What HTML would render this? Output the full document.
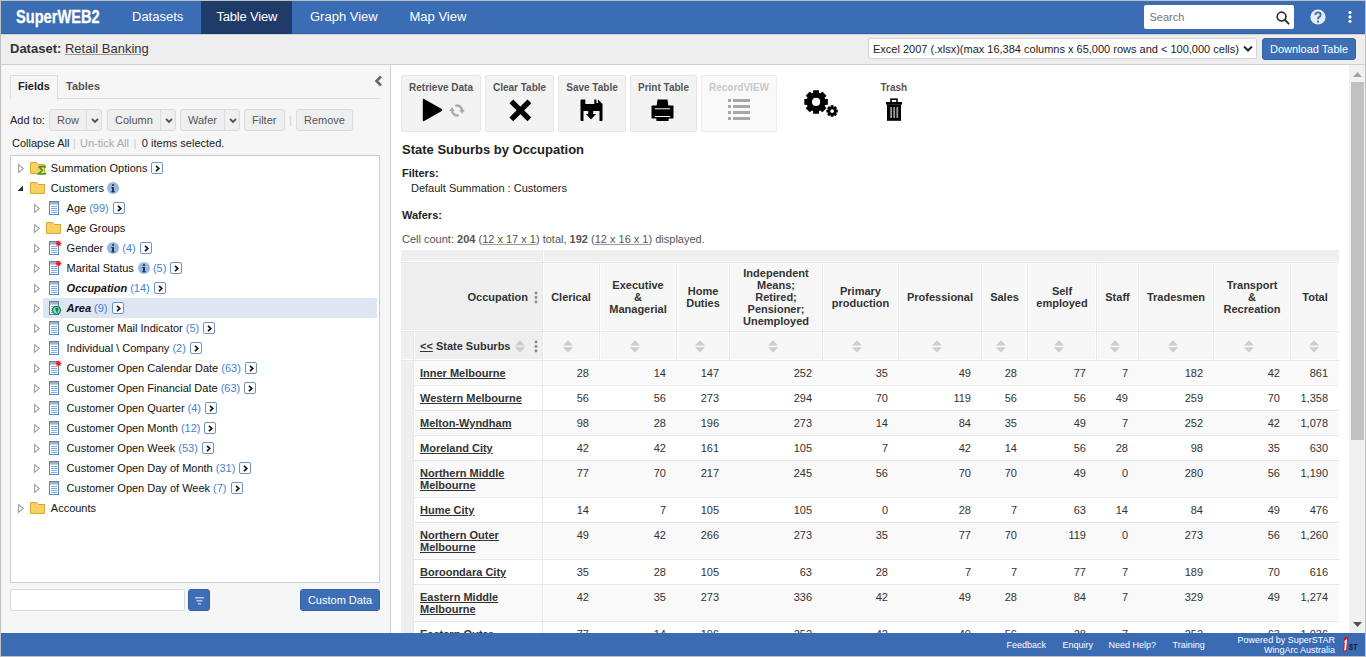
<!DOCTYPE html>
<html><head><meta charset="utf-8">
<style>
*{box-sizing:border-box;margin:0;padding:0}
html,body{width:1366px;height:657px;overflow:hidden;background:#c0c0c0;font-family:"Liberation Sans",sans-serif;font-size:11px;color:#222}
.a{position:absolute;white-space:nowrap}
svg{position:absolute;overflow:visible}
#nav{position:absolute;left:1px;top:1px;width:1364px;height:33px;background:#3b6db4;border-bottom:1px solid #2d62ad}
#logo{position:absolute;left:15.3px;top:5px;color:#fff;font-weight:bold;font-size:18.5px;transform:scaleX(0.79);-webkit-text-stroke:0.3px #fff;transform-origin:0 0;white-space:nowrap}
.nv{position:absolute;top:1px;height:33px;line-height:31px;color:#fff;font-size:13px;white-space:nowrap}
.nv.act{background:#1f3c69}
#search{position:absolute;left:1144px;top:5px;width:150px;height:24px;background:#fff;border-radius:2px}
#dsbar{position:absolute;left:1px;top:34px;width:1364px;height:31px;background:#eeeeee;border-top:1px solid #d2d2d2;border-bottom:1px solid #cfcfcf}
#left{position:absolute;left:1px;top:65px;width:390px;height:568px;background:#f6f6f6;border-right:1px solid #cfcfcf}
#right{position:absolute;left:391px;top:65px;width:974px;height:568px;background:#fff}
#footer{position:absolute;left:1px;top:633px;width:1364px;height:23px;background:#3a6bb3}
.btn{position:absolute;top:109px;height:22px;background:#efefef;border:1px solid #dcdcdc;border-radius:3px;color:#555;font-size:11px;line-height:20px;white-space:nowrap}
.btn .sp{position:absolute;top:0;bottom:0;width:1px;background:#dcdcdc}
.tr{position:absolute;height:20px;line-height:20px;white-space:nowrap;font-size:11px;color:#111}
.cnt{color:#4a7fd0}
.go{position:absolute;width:12px;height:12px;border:1px solid #6b93cc;border-radius:2px;background:#fff}
.tb{position:absolute;top:75px;height:57px;background:#f3f3f3;border:1px solid #e6e6e6;border-radius:2px;color:#555;font-weight:bold;font-size:10px;text-align:center;white-space:nowrap}
.tb .t{position:absolute;left:0;right:0;top:6px}
</style></head><body>
<div id="nav">
  <div id="logo">SuperWEB2</div>
  <div class="nv" style="left:131px;top:0">Datasets</div>
  <div class="nv act" style="left:200px;top:0;width:91px;padding-left:15.5px;letter-spacing:-0.2px">Table View</div>
  <div class="nv" style="left:309px;top:0">Graph View</div>
  <div class="nv" style="left:408.5px;top:0">Map View</div>
</div>
<div id="search"><span class="a" style="left:5.5px;top:6px;font-size:11px;color:#757575">Search</span>
  <svg style="left:132px;top:6px" width="14" height="14" viewBox="0 0 14 14"><circle cx="5.6" cy="5.6" r="4.4" fill="none" stroke="#333" stroke-width="1.7"/><line x1="8.8" y1="8.8" x2="12.6" y2="12.6" stroke="#333" stroke-width="2" stroke-linecap="round"/></svg>
</div>
<svg style="left:1310px;top:9px" width="16" height="16" viewBox="0 0 16 16"><circle cx="8" cy="8" r="7.6" fill="#e6edf7"/><path d="M5.4,6.1 Q5.4,3.4 8,3.4 Q10.6,3.4 10.6,5.7 Q10.6,7.3 9,8.1 Q8,8.6 8,10.2" fill="none" stroke="#3b6db4" stroke-width="1.9"/><rect x="7" y="11.6" width="2" height="1.9" fill="#3b6db4"/></svg>
<svg style="left:1348px;top:10px" width="4" height="14" viewBox="0 0 4 14"><circle cx="2" cy="2.5" r="1.55" fill="#fff"/><circle cx="2" cy="6.9" r="1.55" fill="#fff"/><circle cx="2" cy="11.3" r="1.55" fill="#fff"/></svg>

<div id="dsbar"></div>
<div class="a" style="left:10px;top:41px;font-size:13px;color:#333"><b>Dataset:</b> <span style="text-decoration:underline;text-decoration-color:#999">Retail Banking</span></div>
<div class="a" style="left:868px;top:38px;width:389px;height:21px;background:#fff;border:1px solid #d6d6d6;border-radius:2px;font-size:11px;color:#222;padding:4px 0 0 4px">Excel 2007 (.xlsx)(max 16,384 columns x 65,000 rows and &lt; 100,000 cells)
  <svg style="left:374px;top:6px" width="10" height="8" viewBox="0 0 10 8"><polyline points="1,1.5 5,5.5 9,1.5" fill="none" stroke="#222" stroke-width="2"/></svg>
</div>
<div class="a" style="left:1262px;top:38px;width:94px;height:22px;background:#3e6fb6;border:1px solid #35629f;border-radius:3px;color:#fff;font-size:11px;padding:4px 0 0 7px">Download Table</div>
<div id="left"></div>
<!-- tabs -->
<div class="a" style="left:10px;top:75px;width:48px;height:24px;border:1px solid #dcdcdc;border-bottom:none;background:#f6f6f6"></div>
<div class="a" style="left:10px;top:98px;width:370px;height:1px;background:#dcdcdc"></div>
<div class="a" style="left:58px;top:98px;width:0;height:1px"></div>
<div class="a" style="left:11px;top:98px;width:46px;height:1px;background:#f6f6f6"></div>
<div class="a" style="left:18px;top:80px;font-weight:bold;color:#222">Fields</div>
<div class="a" style="left:66px;top:80px;font-weight:bold;color:#555">Tables</div>
<svg style="left:374px;top:75px" width="9" height="12" viewBox="0 0 9 12"><polyline points="7,1.5 2.5,6 7,10.5" fill="none" stroke="#666" stroke-width="2.6"/></svg>
<!-- add to -->
<div class="a" style="left:10px;top:114px;color:#222">Add to:</div>
<div class="btn" style="left:49px;width:53px"><span class="a" style="left:7px">Row</span><div class="sp" style="left:36px"></div><svg style="left:41px;top:8px" width="8" height="6" viewBox="0 0 8 6"><polyline points="1,1 4,4 7,1" fill="none" stroke="#555" stroke-width="1.8"/></svg></div>
<div class="btn" style="left:107px;width:69px"><span class="a" style="left:7px">Column</span><div class="sp" style="left:52px"></div><svg style="left:57px;top:8px" width="8" height="6" viewBox="0 0 8 6"><polyline points="1,1 4,4 7,1" fill="none" stroke="#555" stroke-width="1.8"/></svg></div>
<div class="btn" style="left:180px;width:60px"><span class="a" style="left:7px">Wafer</span><div class="sp" style="left:43px"></div><svg style="left:48px;top:8px" width="8" height="6" viewBox="0 0 8 6"><polyline points="1,1 4,4 7,1" fill="none" stroke="#555" stroke-width="1.8"/></svg></div>
<div class="btn" style="left:244px;width:41px"><span class="a" style="left:7px">Filter</span></div>
<div class="a" style="left:289px;top:114px;color:#ccc">|</div>
<div class="btn" style="left:296px;width:57px"><span class="a" style="left:7px">Remove</span></div>
<!-- collapse -->
<div class="a" style="left:12px;top:137px;color:#222">Collapse All <span style="color:#c8c8c8;padding:0 1px 0 0.5px">|</span> <span style="color:#a8a8a8">Un-tick All</span> <span style="color:#c8c8c8;padding:0 2.5px 0 1.5px">|</span> 0 items selected.</div>
<!-- tree box -->
<div class="a" style="left:10px;top:155px;width:370px;height:428px;background:#fff;border:1px solid #cccccc"></div>
<div class="a" style="left:43px;top:298px;width:334px;height:20px;background:#dde6f2"></div>
<svg style="left:18px;top:164px" width="6" height="9" viewBox="0 0 6 9"><polygon points="0.6,0.6 5.2,4.5 0.6,8.4" fill="none" stroke="#a0a0a0" stroke-width="1.1"/></svg>
<svg style="left:30px;top:162px" width="17" height="14" viewBox="0 0 17 14"><path d="M0.5,0.5 H6.8 L8.5,2.5 H14.5 V11.5 H0.5 Z" fill="#fdd05f" stroke="#d8a834" stroke-width="1"/><path d="M8.6,4.6 H15.4 V5.8 M8.6,4.6 L12.2,8.3 L8.6,12 H15.4 V10.8" fill="none" stroke="#3a9a28" stroke-width="1.6"/></svg>
<div class="tr" style="left:50.8px;top:158px;">Summation Options</div>
<div class="go" style="left:151px;top:162px"><svg style="left:3px;top:2px" width="5" height="7" viewBox="0 0 5 7"><polyline points="1,0.8 3.8,3.5 1,6.2" fill="none" stroke="#111" stroke-width="1.7"/></svg></div>
<svg style="left:17px;top:185px" width="7" height="7" viewBox="0 0 7 7"><polygon points="6,0.5 6,6 0.5,6" fill="#333"/></svg>
<svg style="left:30px;top:182px" width="17" height="14" viewBox="0 0 17 14"><path d="M0.5,0.5 H6.8 L8.5,2.5 H14.5 V11.5 H0.5 Z" fill="#fdd05f" stroke="#d8a834" stroke-width="1"/></svg>
<div class="tr" style="left:50.8px;top:178px;">Customers</div>
<svg style="left:107px;top:182px" width="12" height="12" viewBox="0 0 12 12"><circle cx="6" cy="6" r="6" fill="#98b8de"/><rect x="5" y="5" width="2" height="5.2" fill="#1d3a5e"/><rect x="4.2" y="9.2" width="3.6" height="1" fill="#1d3a5e"/><rect x="4.3" y="5" width="1.5" height="1" fill="#1d3a5e"/><circle cx="6" cy="3" r="1.1" fill="#1d3a5e"/></svg>
<svg style="left:34px;top:204px" width="6" height="9" viewBox="0 0 6 9"><polygon points="0.6,0.6 5.2,4.5 0.6,8.4" fill="none" stroke="#a0a0a0" stroke-width="1.1"/></svg>
<svg style="left:49px;top:201px" width="13" height="15" viewBox="0 0 13 15"><rect x="0.5" y="0.5" width="9" height="13" fill="#fff" stroke="#4f83cc" stroke-width="1"/><rect x="1" y="1" width="8" height="2.6" fill="#b0b0b0"/><rect x="2" y="5" width="6" height="1" fill="#7fa8e0"/><rect x="2" y="7" width="6" height="1" fill="#7fa8e0"/><rect x="2" y="9" width="6" height="1" fill="#7fa8e0"/><rect x="2" y="11" width="6" height="1" fill="#7fa8e0"/></svg>
<div class="tr" style="left:66.6px;top:198px;">Age</div>
<div class="tr cnt" style="left:89.2px;top:198px">(99)</div>
<div class="go" style="left:113px;top:202px"><svg style="left:3px;top:2px" width="5" height="7" viewBox="0 0 5 7"><polyline points="1,0.8 3.8,3.5 1,6.2" fill="none" stroke="#111" stroke-width="1.7"/></svg></div>
<svg style="left:34px;top:224px" width="6" height="9" viewBox="0 0 6 9"><polygon points="0.6,0.6 5.2,4.5 0.6,8.4" fill="none" stroke="#a0a0a0" stroke-width="1.1"/></svg>
<svg style="left:46px;top:222px" width="17" height="14" viewBox="0 0 17 14"><path d="M0.5,0.5 H6.8 L8.5,2.5 H14.5 V11.5 H0.5 Z" fill="#fdd05f" stroke="#d8a834" stroke-width="1"/></svg>
<div class="tr" style="left:66.6px;top:218px;">Age Groups</div>
<svg style="left:34px;top:244px" width="6" height="9" viewBox="0 0 6 9"><polygon points="0.6,0.6 5.2,4.5 0.6,8.4" fill="none" stroke="#a0a0a0" stroke-width="1.1"/></svg>
<svg style="left:49px;top:241px" width="13" height="15" viewBox="0 0 13 15"><rect x="0.5" y="0.5" width="9" height="13" fill="#fff" stroke="#4f83cc" stroke-width="1"/><rect x="1" y="1" width="8" height="2.6" fill="#b0b0b0"/><rect x="2" y="5" width="6" height="1" fill="#7fa8e0"/><rect x="2" y="7" width="6" height="1" fill="#7fa8e0"/><rect x="2" y="9" width="6" height="1" fill="#7fa8e0"/><rect x="2" y="11" width="6" height="1" fill="#7fa8e0"/><g stroke="#ee1c1c" stroke-width="1.1"><line x1="9.5" y1="-0.3" x2="9.5" y2="5.3"/><line x1="6.7" y1="2.5" x2="12.3" y2="2.5"/><line x1="7.5" y1="0.5" x2="11.5" y2="4.5"/><line x1="11.5" y1="0.5" x2="7.5" y2="4.5"/></g><circle cx="9.5" cy="2.5" r="1.4" fill="#ee1c1c"/></svg>
<div class="tr" style="left:66.6px;top:238px;">Gender</div>
<svg style="left:107px;top:242px" width="12" height="12" viewBox="0 0 12 12"><circle cx="6" cy="6" r="6" fill="#98b8de"/><rect x="5" y="5" width="2" height="5.2" fill="#1d3a5e"/><rect x="4.2" y="9.2" width="3.6" height="1" fill="#1d3a5e"/><rect x="4.3" y="5" width="1.5" height="1" fill="#1d3a5e"/><circle cx="6" cy="3" r="1.1" fill="#1d3a5e"/></svg>
<div class="tr cnt" style="left:122.3px;top:238px">(4)</div>
<div class="go" style="left:140px;top:242px"><svg style="left:3px;top:2px" width="5" height="7" viewBox="0 0 5 7"><polyline points="1,0.8 3.8,3.5 1,6.2" fill="none" stroke="#111" stroke-width="1.7"/></svg></div>
<svg style="left:34px;top:264px" width="6" height="9" viewBox="0 0 6 9"><polygon points="0.6,0.6 5.2,4.5 0.6,8.4" fill="none" stroke="#a0a0a0" stroke-width="1.1"/></svg>
<svg style="left:49px;top:261px" width="13" height="15" viewBox="0 0 13 15"><rect x="0.5" y="0.5" width="9" height="13" fill="#fff" stroke="#4f83cc" stroke-width="1"/><rect x="1" y="1" width="8" height="2.6" fill="#b0b0b0"/><rect x="2" y="5" width="6" height="1" fill="#7fa8e0"/><rect x="2" y="7" width="6" height="1" fill="#7fa8e0"/><rect x="2" y="9" width="6" height="1" fill="#7fa8e0"/><rect x="2" y="11" width="6" height="1" fill="#7fa8e0"/><g stroke="#ee1c1c" stroke-width="1.1"><line x1="9.5" y1="-0.3" x2="9.5" y2="5.3"/><line x1="6.7" y1="2.5" x2="12.3" y2="2.5"/><line x1="7.5" y1="0.5" x2="11.5" y2="4.5"/><line x1="11.5" y1="0.5" x2="7.5" y2="4.5"/></g><circle cx="9.5" cy="2.5" r="1.4" fill="#ee1c1c"/></svg>
<div class="tr" style="left:66.6px;top:258px;">Marital Status</div>
<svg style="left:138px;top:262px" width="12" height="12" viewBox="0 0 12 12"><circle cx="6" cy="6" r="6" fill="#98b8de"/><rect x="5" y="5" width="2" height="5.2" fill="#1d3a5e"/><rect x="4.2" y="9.2" width="3.6" height="1" fill="#1d3a5e"/><rect x="4.3" y="5" width="1.5" height="1" fill="#1d3a5e"/><circle cx="6" cy="3" r="1.1" fill="#1d3a5e"/></svg>
<div class="tr cnt" style="left:152.9px;top:258px">(5)</div>
<div class="go" style="left:170px;top:262px"><svg style="left:3px;top:2px" width="5" height="7" viewBox="0 0 5 7"><polyline points="1,0.8 3.8,3.5 1,6.2" fill="none" stroke="#111" stroke-width="1.7"/></svg></div>
<svg style="left:34px;top:284px" width="6" height="9" viewBox="0 0 6 9"><polygon points="0.6,0.6 5.2,4.5 0.6,8.4" fill="none" stroke="#a0a0a0" stroke-width="1.1"/></svg>
<svg style="left:49px;top:281px" width="13" height="15" viewBox="0 0 13 15"><rect x="0.5" y="0.5" width="9" height="13" fill="#fff" stroke="#4f83cc" stroke-width="1"/><rect x="1" y="1" width="8" height="2.6" fill="#b0b0b0"/><rect x="2" y="5" width="6" height="1" fill="#7fa8e0"/><rect x="2" y="7" width="6" height="1" fill="#7fa8e0"/><rect x="2" y="9" width="6" height="1" fill="#7fa8e0"/><rect x="2" y="11" width="6" height="1" fill="#7fa8e0"/></svg>
<div class="tr" style="left:66.6px;top:278px;font-weight:bold;font-style:italic">Occupation</div>
<div class="tr cnt" style="left:130.2px;top:278px">(14)</div>
<div class="go" style="left:154px;top:282px"><svg style="left:3px;top:2px" width="5" height="7" viewBox="0 0 5 7"><polyline points="1,0.8 3.8,3.5 1,6.2" fill="none" stroke="#111" stroke-width="1.7"/></svg></div>
<svg style="left:34px;top:304px" width="6" height="9" viewBox="0 0 6 9"><polygon points="0.6,0.6 5.2,4.5 0.6,8.4" fill="none" stroke="#a0a0a0" stroke-width="1.1"/></svg>
<svg style="left:49px;top:301px" width="13" height="15" viewBox="0 0 13 15"><rect x="0.5" y="0.5" width="9" height="13" fill="#fff" stroke="#4f83cc" stroke-width="1"/><rect x="1" y="1" width="8" height="2.6" fill="#b0b0b0"/><rect x="2" y="5" width="6" height="1" fill="#7fa8e0"/><rect x="2" y="7" width="6" height="1" fill="#7fa8e0"/><rect x="2" y="9" width="6" height="1" fill="#7fa8e0"/><rect x="2" y="11" width="6" height="1" fill="#7fa8e0"/><circle cx="7.5" cy="9.3" r="4" fill="#8ec8f8" stroke="#12882a" stroke-width="1.3"/><path d="M6.2,7.2 Q8.5,6.2 9.8,8 Q8.2,9.5 8.6,12.4 Q6.6,10.2 6.2,7.2 Z" fill="#12882a"/></svg>
<div class="tr" style="left:66.6px;top:298px;font-weight:bold;font-style:italic">Area</div>
<div class="tr cnt" style="left:94.1px;top:298px">(9)</div>
<div class="go" style="left:112px;top:302px"><svg style="left:3px;top:2px" width="5" height="7" viewBox="0 0 5 7"><polyline points="1,0.8 3.8,3.5 1,6.2" fill="none" stroke="#111" stroke-width="1.7"/></svg></div>
<svg style="left:34px;top:324px" width="6" height="9" viewBox="0 0 6 9"><polygon points="0.6,0.6 5.2,4.5 0.6,8.4" fill="none" stroke="#a0a0a0" stroke-width="1.1"/></svg>
<svg style="left:49px;top:321px" width="13" height="15" viewBox="0 0 13 15"><rect x="0.5" y="0.5" width="9" height="13" fill="#fff" stroke="#4f83cc" stroke-width="1"/><rect x="1" y="1" width="8" height="2.6" fill="#b0b0b0"/><rect x="2" y="5" width="6" height="1" fill="#7fa8e0"/><rect x="2" y="7" width="6" height="1" fill="#7fa8e0"/><rect x="2" y="9" width="6" height="1" fill="#7fa8e0"/><rect x="2" y="11" width="6" height="1" fill="#7fa8e0"/></svg>
<div class="tr" style="left:66.6px;top:318px;">Customer Mail Indicator</div>
<div class="tr cnt" style="left:185.8px;top:318px">(5)</div>
<div class="go" style="left:203px;top:322px"><svg style="left:3px;top:2px" width="5" height="7" viewBox="0 0 5 7"><polyline points="1,0.8 3.8,3.5 1,6.2" fill="none" stroke="#111" stroke-width="1.7"/></svg></div>
<svg style="left:34px;top:344px" width="6" height="9" viewBox="0 0 6 9"><polygon points="0.6,0.6 5.2,4.5 0.6,8.4" fill="none" stroke="#a0a0a0" stroke-width="1.1"/></svg>
<svg style="left:49px;top:341px" width="13" height="15" viewBox="0 0 13 15"><rect x="0.5" y="0.5" width="9" height="13" fill="#fff" stroke="#4f83cc" stroke-width="1"/><rect x="1" y="1" width="8" height="2.6" fill="#b0b0b0"/><rect x="2" y="5" width="6" height="1" fill="#7fa8e0"/><rect x="2" y="7" width="6" height="1" fill="#7fa8e0"/><rect x="2" y="9" width="6" height="1" fill="#7fa8e0"/><rect x="2" y="11" width="6" height="1" fill="#7fa8e0"/></svg>
<div class="tr" style="left:66.6px;top:338px;">Individual \ Company</div>
<div class="tr cnt" style="left:172.4px;top:338px">(2)</div>
<div class="go" style="left:190px;top:342px"><svg style="left:3px;top:2px" width="5" height="7" viewBox="0 0 5 7"><polyline points="1,0.8 3.8,3.5 1,6.2" fill="none" stroke="#111" stroke-width="1.7"/></svg></div>
<svg style="left:34px;top:364px" width="6" height="9" viewBox="0 0 6 9"><polygon points="0.6,0.6 5.2,4.5 0.6,8.4" fill="none" stroke="#a0a0a0" stroke-width="1.1"/></svg>
<svg style="left:49px;top:361px" width="13" height="15" viewBox="0 0 13 15"><rect x="0.5" y="0.5" width="9" height="13" fill="#fff" stroke="#4f83cc" stroke-width="1"/><rect x="1" y="1" width="8" height="2.6" fill="#b0b0b0"/><rect x="2" y="5" width="6" height="1" fill="#7fa8e0"/><rect x="2" y="7" width="6" height="1" fill="#7fa8e0"/><rect x="2" y="9" width="6" height="1" fill="#7fa8e0"/><rect x="2" y="11" width="6" height="1" fill="#7fa8e0"/><g stroke="#ee1c1c" stroke-width="1.1"><line x1="9.5" y1="-0.3" x2="9.5" y2="5.3"/><line x1="6.7" y1="2.5" x2="12.3" y2="2.5"/><line x1="7.5" y1="0.5" x2="11.5" y2="4.5"/><line x1="11.5" y1="0.5" x2="7.5" y2="4.5"/></g><circle cx="9.5" cy="2.5" r="1.4" fill="#ee1c1c"/></svg>
<div class="tr" style="left:66.6px;top:358px;">Customer Open Calendar Date</div>
<div class="tr cnt" style="left:221.3px;top:358px">(63)</div>
<div class="go" style="left:245px;top:362px"><svg style="left:3px;top:2px" width="5" height="7" viewBox="0 0 5 7"><polyline points="1,0.8 3.8,3.5 1,6.2" fill="none" stroke="#111" stroke-width="1.7"/></svg></div>
<svg style="left:34px;top:384px" width="6" height="9" viewBox="0 0 6 9"><polygon points="0.6,0.6 5.2,4.5 0.6,8.4" fill="none" stroke="#a0a0a0" stroke-width="1.1"/></svg>
<svg style="left:49px;top:381px" width="13" height="15" viewBox="0 0 13 15"><rect x="0.5" y="0.5" width="9" height="13" fill="#fff" stroke="#4f83cc" stroke-width="1"/><rect x="1" y="1" width="8" height="2.6" fill="#b0b0b0"/><rect x="2" y="5" width="6" height="1" fill="#7fa8e0"/><rect x="2" y="7" width="6" height="1" fill="#7fa8e0"/><rect x="2" y="9" width="6" height="1" fill="#7fa8e0"/><rect x="2" y="11" width="6" height="1" fill="#7fa8e0"/></svg>
<div class="tr" style="left:66.6px;top:378px;">Customer Open Financial Date</div>
<div class="tr cnt" style="left:220.7px;top:378px">(63)</div>
<div class="go" style="left:244px;top:382px"><svg style="left:3px;top:2px" width="5" height="7" viewBox="0 0 5 7"><polyline points="1,0.8 3.8,3.5 1,6.2" fill="none" stroke="#111" stroke-width="1.7"/></svg></div>
<svg style="left:34px;top:404px" width="6" height="9" viewBox="0 0 6 9"><polygon points="0.6,0.6 5.2,4.5 0.6,8.4" fill="none" stroke="#a0a0a0" stroke-width="1.1"/></svg>
<svg style="left:49px;top:401px" width="13" height="15" viewBox="0 0 13 15"><rect x="0.5" y="0.5" width="9" height="13" fill="#fff" stroke="#4f83cc" stroke-width="1"/><rect x="1" y="1" width="8" height="2.6" fill="#b0b0b0"/><rect x="2" y="5" width="6" height="1" fill="#7fa8e0"/><rect x="2" y="7" width="6" height="1" fill="#7fa8e0"/><rect x="2" y="9" width="6" height="1" fill="#7fa8e0"/><rect x="2" y="11" width="6" height="1" fill="#7fa8e0"/></svg>
<div class="tr" style="left:66.6px;top:398px;">Customer Open Quarter</div>
<div class="tr cnt" style="left:187.6px;top:398px">(4)</div>
<div class="go" style="left:205px;top:402px"><svg style="left:3px;top:2px" width="5" height="7" viewBox="0 0 5 7"><polyline points="1,0.8 3.8,3.5 1,6.2" fill="none" stroke="#111" stroke-width="1.7"/></svg></div>
<svg style="left:34px;top:424px" width="6" height="9" viewBox="0 0 6 9"><polygon points="0.6,0.6 5.2,4.5 0.6,8.4" fill="none" stroke="#a0a0a0" stroke-width="1.1"/></svg>
<svg style="left:49px;top:421px" width="13" height="15" viewBox="0 0 13 15"><rect x="0.5" y="0.5" width="9" height="13" fill="#fff" stroke="#4f83cc" stroke-width="1"/><rect x="1" y="1" width="8" height="2.6" fill="#b0b0b0"/><rect x="2" y="5" width="6" height="1" fill="#7fa8e0"/><rect x="2" y="7" width="6" height="1" fill="#7fa8e0"/><rect x="2" y="9" width="6" height="1" fill="#7fa8e0"/><rect x="2" y="11" width="6" height="1" fill="#7fa8e0"/></svg>
<div class="tr" style="left:66.6px;top:418px;">Customer Open Month</div>
<div class="tr cnt" style="left:180.9px;top:418px">(12)</div>
<div class="go" style="left:204px;top:422px"><svg style="left:3px;top:2px" width="5" height="7" viewBox="0 0 5 7"><polyline points="1,0.8 3.8,3.5 1,6.2" fill="none" stroke="#111" stroke-width="1.7"/></svg></div>
<svg style="left:34px;top:444px" width="6" height="9" viewBox="0 0 6 9"><polygon points="0.6,0.6 5.2,4.5 0.6,8.4" fill="none" stroke="#a0a0a0" stroke-width="1.1"/></svg>
<svg style="left:49px;top:441px" width="13" height="15" viewBox="0 0 13 15"><rect x="0.5" y="0.5" width="9" height="13" fill="#fff" stroke="#4f83cc" stroke-width="1"/><rect x="1" y="1" width="8" height="2.6" fill="#b0b0b0"/><rect x="2" y="5" width="6" height="1" fill="#7fa8e0"/><rect x="2" y="7" width="6" height="1" fill="#7fa8e0"/><rect x="2" y="9" width="6" height="1" fill="#7fa8e0"/><rect x="2" y="11" width="6" height="1" fill="#7fa8e0"/></svg>
<div class="tr" style="left:66.6px;top:438px;">Customer Open Week</div>
<div class="tr cnt" style="left:178.3px;top:438px">(53)</div>
<div class="go" style="left:202px;top:442px"><svg style="left:3px;top:2px" width="5" height="7" viewBox="0 0 5 7"><polyline points="1,0.8 3.8,3.5 1,6.2" fill="none" stroke="#111" stroke-width="1.7"/></svg></div>
<svg style="left:34px;top:464px" width="6" height="9" viewBox="0 0 6 9"><polygon points="0.6,0.6 5.2,4.5 0.6,8.4" fill="none" stroke="#a0a0a0" stroke-width="1.1"/></svg>
<svg style="left:49px;top:461px" width="13" height="15" viewBox="0 0 13 15"><rect x="0.5" y="0.5" width="9" height="13" fill="#fff" stroke="#4f83cc" stroke-width="1"/><rect x="1" y="1" width="8" height="2.6" fill="#b0b0b0"/><rect x="2" y="5" width="6" height="1" fill="#7fa8e0"/><rect x="2" y="7" width="6" height="1" fill="#7fa8e0"/><rect x="2" y="9" width="6" height="1" fill="#7fa8e0"/><rect x="2" y="11" width="6" height="1" fill="#7fa8e0"/></svg>
<div class="tr" style="left:66.6px;top:458px;">Customer Open Day of Month</div>
<div class="tr cnt" style="left:215.8px;top:458px">(31)</div>
<div class="go" style="left:239px;top:462px"><svg style="left:3px;top:2px" width="5" height="7" viewBox="0 0 5 7"><polyline points="1,0.8 3.8,3.5 1,6.2" fill="none" stroke="#111" stroke-width="1.7"/></svg></div>
<svg style="left:34px;top:484px" width="6" height="9" viewBox="0 0 6 9"><polygon points="0.6,0.6 5.2,4.5 0.6,8.4" fill="none" stroke="#a0a0a0" stroke-width="1.1"/></svg>
<svg style="left:49px;top:481px" width="13" height="15" viewBox="0 0 13 15"><rect x="0.5" y="0.5" width="9" height="13" fill="#fff" stroke="#4f83cc" stroke-width="1"/><rect x="1" y="1" width="8" height="2.6" fill="#b0b0b0"/><rect x="2" y="5" width="6" height="1" fill="#7fa8e0"/><rect x="2" y="7" width="6" height="1" fill="#7fa8e0"/><rect x="2" y="9" width="6" height="1" fill="#7fa8e0"/><rect x="2" y="11" width="6" height="1" fill="#7fa8e0"/></svg>
<div class="tr" style="left:66.6px;top:478px;">Customer Open Day of Week</div>
<div class="tr cnt" style="left:213.1px;top:478px">(7)</div>
<div class="go" style="left:231px;top:482px"><svg style="left:3px;top:2px" width="5" height="7" viewBox="0 0 5 7"><polyline points="1,0.8 3.8,3.5 1,6.2" fill="none" stroke="#111" stroke-width="1.7"/></svg></div>
<svg style="left:18px;top:504px" width="6" height="9" viewBox="0 0 6 9"><polygon points="0.6,0.6 5.2,4.5 0.6,8.4" fill="none" stroke="#a0a0a0" stroke-width="1.1"/></svg>
<svg style="left:30px;top:502px" width="17" height="14" viewBox="0 0 17 14"><path d="M0.5,0.5 H6.8 L8.5,2.5 H14.5 V11.5 H0.5 Z" fill="#fdd05f" stroke="#d8a834" stroke-width="1"/></svg>
<div class="tr" style="left:50.8px;top:498px;">Accounts</div>

<!-- bottom -->
<div class="a" style="left:10px;top:589px;width:175px;height:22px;background:#fff;border:1px solid #dcdcdc;border-radius:2px"></div>
<div class="a" style="left:188px;top:589px;width:22px;height:22px;background:#3e6fb6;border:1px solid #35629f;border-radius:3px"><svg style="left:6px;top:7px" width="9" height="8" viewBox="0 0 9 8"><rect x="0" y="0" width="9" height="1.6" fill="#a9c3e8"/><rect x="1.5" y="3" width="6" height="1.6" fill="#a9c3e8"/><rect x="3" y="6" width="3" height="1.6" fill="#a9c3e8"/></svg></div>
<div class="a" style="left:300px;top:589px;width:80px;height:22px;background:#3e6fb6;border:1px solid #35629f;border-radius:3px;color:#fff;font-size:11px;line-height:20px;text-align:center">Custom Data</div>
<div id="right"></div>
<!-- toolbar -->
<div class="tb" style="left:401px;width:80px"><div class="t">Retrieve Data</div>
 <svg style="left:19.5px;top:22px" width="21" height="24" viewBox="0 0 21 24"><path d="M2,0.9 Q0.8,0.2 0.8,1.7 V22.3 Q0.8,23.8 2.1,23.1 L19.8,12.9 Q20.9,12 19.8,11.1 Z" fill="#000"/></svg>
 <svg style="left:47px;top:28px" width="17" height="14" viewBox="0 0 17 14"><path d="M6.29,1.8 A5,5 0 0 1 13,6.5" fill="none" stroke="#ababab" stroke-width="2.5"/><polygon points="10.2,6.1 15.8,6.1 13,10" fill="#ababab"/><path d="M9.71,11.2 A5,5 0 0 1 3,6.5" fill="none" stroke="#ababab" stroke-width="2.5"/><polygon points="0.2,6.9 5.8,6.9 3,3" fill="#ababab"/></svg>
</div>
<div class="tb" style="left:485px;width:69px"><div class="t">Clear Table</div>
 <svg style="left:22.5px;top:22.5px" width="23" height="23" viewBox="0 0 23 23"><path d="M2.3,2.3 L20.4,20.4 M20.4,2.3 L2.3,20.4" stroke="#000" stroke-width="5.4" stroke-linecap="butt"/></svg>
</div>
<div class="tb" style="left:558px;width:68px"><div class="t">Save Table</div>
 <svg style="left:21.3px;top:22.8px" width="23" height="23" viewBox="0 0 23 23"><path d="M0.5,1.5 Q0.5,0.5 1.5,0.5 H18 L22.5,5 V21 Q22.5,22 21.5,22 H1.5 Q0.5,22 0.5,21 Z" fill="#000"/><rect x="5.3" y="0" width="9" height="5" fill="#f3f3f3"/><rect x="16.4" y="0" width="1.5" height="4" fill="#f3f3f3"/><rect x="3.5" y="12" width="16" height="11" fill="#f3f3f3"/><rect x="8.2" y="12" width="5" height="3.5" fill="#000"/><polygon points="6,15 16,15 11,20.5" fill="#000"/></svg>
</div>
<div class="tb" style="left:630px;width:67px"><div class="t">Print Table</div>
 <svg style="left:20px;top:23px" width="23" height="23" viewBox="0 0 23 23"><path d="M6.5,0.5 H16.5 L17.8,9.5 H5.2 Z" fill="#000"/><rect x="0.5" y="6.5" width="22" height="13" rx="0.8" fill="#000"/><rect x="3.8" y="9.3" width="15.4" height="1" fill="#f3f3f3"/><rect x="3.8" y="17" width="15.4" height="1" fill="#f3f3f3"/><path d="M5.2,18 H17.8 L17.5,22 H5.5 Z" fill="#000"/></svg>
</div>
<div class="tb" style="left:701px;width:76px;background:#f9f9f9;border-color:#ececec;color:#c9c9c9"><div class="t">RecordVIEW</div>
 <svg style="left:26px;top:23px" width="23" height="23" viewBox="0 0 23 23" ><g fill="#a8a8a8"><rect x="0" y="0" width="3" height="3"/><rect x="5" y="0" width="17" height="3"/><rect x="0" y="6" width="3" height="3"/><rect x="5" y="6" width="17" height="3"/><rect x="0" y="12" width="3" height="3"/><rect x="5" y="12" width="17" height="3"/><rect x="0" y="18" width="3" height="3"/><rect x="5" y="18" width="17" height="3"/></g></svg>
</div>
<svg style="left:803px;top:89px" width="36" height="29" viewBox="0 0 36 29"><path fill-rule="evenodd" d="M21.88,9.26 L22.10,9.87 L24.85,10.02 L24.85,15.78 L22.10,15.93 L21.88,16.54 L21.61,17.12 L23.45,19.17 L19.37,23.25 L17.32,21.41 L16.74,21.68 L16.13,21.90 L15.98,24.65 L10.22,24.65 L10.07,21.90 L9.46,21.68 L8.88,21.41 L6.83,23.25 L2.75,19.17 L4.59,17.12 L4.32,16.54 L4.10,15.93 L1.35,15.78 L1.35,10.02 L4.10,9.87 L4.32,9.26 L4.59,8.68 L2.75,6.63 L6.83,2.55 L8.88,4.39 L9.46,4.12 L10.07,3.90 L10.22,1.15 L15.98,1.15 L16.13,3.90 L16.74,4.12 L17.32,4.39 L19.37,2.55 L23.45,6.63 L21.61,8.68 Z M17.2,12.9 A4.1,4.1 0 1 0 9.0,12.9 A4.1,4.1 0 1 0 17.2,12.9 Z" fill="#000"/><path fill-rule="evenodd" d="M33.35,20.34 L33.46,20.63 L34.83,20.70 L34.83,23.50 L33.46,23.57 L33.35,23.86 L33.22,24.14 L34.15,25.16 L32.16,27.15 L31.14,26.22 L30.86,26.35 L30.57,26.46 L30.50,27.83 L27.70,27.83 L27.63,26.46 L27.34,26.35 L27.06,26.22 L26.04,27.15 L24.05,25.16 L24.98,24.14 L24.85,23.86 L24.74,23.57 L23.37,23.50 L23.37,20.70 L24.74,20.63 L24.85,20.34 L24.98,20.06 L24.05,19.04 L26.04,17.05 L27.06,17.98 L27.34,17.85 L27.63,17.74 L27.70,16.37 L30.50,16.37 L30.57,17.74 L30.86,17.85 L31.14,17.98 L32.16,17.05 L34.15,19.04 L33.22,20.06 Z M31.0,22.1 A1.9,1.9 0 1 0 27.200000000000003,22.1 A1.9,1.9 0 1 0 31.0,22.1 Z" fill="#000"/></svg>

<div class="a" style="left:880.5px;top:81.5px;font-weight:bold;font-size:10px;color:#555">Trash</div>
<svg style="left:886px;top:99px" width="16" height="22" viewBox="0 0 16 22"><rect x="5" y="0.2" width="6" height="3.5" fill="none" stroke="#000" stroke-width="1.6"/><rect x="0" y="3" width="16" height="2.6" fill="#000"/><rect x="1" y="5.4" width="14" height="16.4" fill="#000"/><rect x="4.2" y="8" width="1.8" height="11" fill="#999"/><rect x="7.3" y="8" width="1.8" height="11" fill="#999"/><rect x="10.4" y="8" width="1.8" height="11" fill="#999"/></svg>
<!-- title -->
<div class="a" style="left:402px;top:142px;font-weight:bold;font-size:13px;color:#222">State Suburbs by Occupation</div>
<div class="a" style="left:402px;top:167px;font-weight:bold;color:#222">Filters:</div>
<div class="a" style="left:411px;top:182px;color:#222">Default Summation : Customers</div>
<div class="a" style="left:402px;top:209px;font-weight:bold;color:#222">Wafers:</div>
<div class="a" style="left:402px;top:233px;color:#555">Cell count: <b>204</b> (<u style="text-decoration-color:#9a9a9a">12 x 17 x 1</u>) total, <b>192</b> (<u style="text-decoration-color:#9a9a9a">12 x 16 x 1</u>) displayed.</div>
<div class="a" style="left:401px;top:250px;width:938px;height:383px;background:#e8e8e8"></div>
<div class="a" style="left:401px;top:250px;width:141px;height:12px;background:#efefef;box-shadow:inset 0 -1px #fff"></div>
<div class="a" style="left:543px;top:250px;width:796px;height:12px;background:#efefef;box-shadow:inset 1px 0 #fff,inset 0 -1px #fff"></div>
<div class="a" style="left:401px;top:263px;width:141px;height:68px;background:#efefef;box-shadow:inset 0 -1px #fff"></div>
<div class="a" style="left:543px;top:263px;width:56px;height:68px;background:#f7f7f7;box-shadow:inset 1px 0 #fff,inset -1px 0 #fff,inset 0 -1px #fff"></div>
<div class="a" style="left:543px;top:291.0px;width:56px;text-align:center;font-weight:bold;line-height:12px;color:#333">Clerical</div>
<div class="a" style="left:600px;top:263px;width:76px;height:68px;background:#f7f7f7;box-shadow:inset 1px 0 #fff,inset -1px 0 #fff,inset 0 -1px #fff"></div>
<div class="a" style="left:600px;top:279.0px;width:76px;text-align:center;font-weight:bold;line-height:12px;color:#333">Executive<br>&amp;<br>Managerial</div>
<div class="a" style="left:677px;top:263px;width:52px;height:68px;background:#f7f7f7;box-shadow:inset 1px 0 #fff,inset -1px 0 #fff,inset 0 -1px #fff"></div>
<div class="a" style="left:677px;top:285.0px;width:52px;text-align:center;font-weight:bold;line-height:12px;color:#333">Home<br>Duties</div>
<div class="a" style="left:730px;top:263px;width:92px;height:68px;background:#f7f7f7;box-shadow:inset 1px 0 #fff,inset -1px 0 #fff,inset 0 -1px #fff"></div>
<div class="a" style="left:730px;top:267.0px;width:92px;text-align:center;font-weight:bold;line-height:12px;color:#333">Independent<br>Means;<br>Retired;<br>Pensioner;<br>Unemployed</div>
<div class="a" style="left:823px;top:263px;width:75px;height:68px;background:#f7f7f7;box-shadow:inset 1px 0 #fff,inset -1px 0 #fff,inset 0 -1px #fff"></div>
<div class="a" style="left:823px;top:285.0px;width:75px;text-align:center;font-weight:bold;line-height:12px;color:#333">Primary<br>production</div>
<div class="a" style="left:899px;top:263px;width:82px;height:68px;background:#f7f7f7;box-shadow:inset 1px 0 #fff,inset -1px 0 #fff,inset 0 -1px #fff"></div>
<div class="a" style="left:899px;top:291.0px;width:82px;text-align:center;font-weight:bold;line-height:12px;color:#333">Professional</div>
<div class="a" style="left:982px;top:263px;width:45px;height:68px;background:#f7f7f7;box-shadow:inset 1px 0 #fff,inset -1px 0 #fff,inset 0 -1px #fff"></div>
<div class="a" style="left:982px;top:291.0px;width:45px;text-align:center;font-weight:bold;line-height:12px;color:#333">Sales</div>
<div class="a" style="left:1028px;top:263px;width:68px;height:68px;background:#f7f7f7;box-shadow:inset 1px 0 #fff,inset -1px 0 #fff,inset 0 -1px #fff"></div>
<div class="a" style="left:1028px;top:285.0px;width:68px;text-align:center;font-weight:bold;line-height:12px;color:#333">Self<br>employed</div>
<div class="a" style="left:1097px;top:263px;width:41px;height:68px;background:#f7f7f7;box-shadow:inset 1px 0 #fff,inset -1px 0 #fff,inset 0 -1px #fff"></div>
<div class="a" style="left:1097px;top:291.0px;width:41px;text-align:center;font-weight:bold;line-height:12px;color:#333">Staff</div>
<div class="a" style="left:1139px;top:263px;width:74px;height:68px;background:#f7f7f7;box-shadow:inset 1px 0 #fff,inset -1px 0 #fff,inset 0 -1px #fff"></div>
<div class="a" style="left:1139px;top:291.0px;width:74px;text-align:center;font-weight:bold;line-height:12px;color:#333">Tradesmen</div>
<div class="a" style="left:1214px;top:263px;width:76px;height:68px;background:#f7f7f7;box-shadow:inset 1px 0 #fff,inset -1px 0 #fff,inset 0 -1px #fff"></div>
<div class="a" style="left:1214px;top:279.0px;width:76px;text-align:center;font-weight:bold;line-height:12px;color:#333">Transport<br>&amp;<br>Recreation</div>
<div class="a" style="left:1291px;top:263px;width:48px;height:68px;background:#f7f7f7;box-shadow:inset 1px 0 #fff,inset -1px 0 #fff,inset 0 -1px #fff"></div>
<div class="a" style="left:1291px;top:291.0px;width:48px;text-align:center;font-weight:bold;line-height:12px;color:#333">Total</div>
<div class="a" style="left:401px;top:291px;width:127px;text-align:right;font-weight:bold;line-height:12px;color:#333">Occupation</div>
<svg style="left:534px;top:290.5px" width="4" height="13" viewBox="0 0 4 13"><circle cx="2" cy="2" r="1.4" fill="#888"/><circle cx="2" cy="6.5" r="1.4" fill="#888"/><circle cx="2" cy="11" r="1.4" fill="#888"/></svg>
<div class="a" style="left:401px;top:332px;width:12px;height:28px;background:#efefef;box-shadow:inset 0 -1px #fff"></div>
<div class="a" style="left:414px;top:332px;width:128px;height:28px;background:#efefef;box-shadow:inset 1px 0 #fff,inset 0 -1px #fff"></div>
<div class="a" style="left:420px;top:340px;font-weight:bold;line-height:12px;color:#333"><u>&lt;&lt;</u> State Suburbs</div>
<svg style="left:515px;top:339.6px" width="10" height="13" viewBox="0 0 10 13"><polygon points="0,5.5 5,0.3 10,5.5" fill="#cdcdcd"/><polygon points="0,7.2 5,12.4 10,7.2" fill="#cdcdcd"/></svg>
<svg style="left:534px;top:339.5px" width="4" height="13" viewBox="0 0 4 13"><circle cx="2" cy="2" r="1.4" fill="#888"/><circle cx="2" cy="6.5" r="1.4" fill="#888"/><circle cx="2" cy="11" r="1.4" fill="#888"/></svg>
<div class="a" style="left:543px;top:332px;width:56px;height:28px;background:#f7f7f7;box-shadow:inset 1px 0 #fff,inset -1px 0 #fff,inset 0 -1px #fff"></div>
<svg style="left:563px;top:339.6px" width="10" height="13" viewBox="0 0 10 13"><polygon points="0,5.5 5,0.3 10,5.5" fill="#cdcdcd"/><polygon points="0,7.2 5,12.4 10,7.2" fill="#cdcdcd"/></svg>
<div class="a" style="left:600px;top:332px;width:76px;height:28px;background:#f7f7f7;box-shadow:inset 1px 0 #fff,inset -1px 0 #fff,inset 0 -1px #fff"></div>
<svg style="left:630px;top:339.6px" width="10" height="13" viewBox="0 0 10 13"><polygon points="0,5.5 5,0.3 10,5.5" fill="#cdcdcd"/><polygon points="0,7.2 5,12.4 10,7.2" fill="#cdcdcd"/></svg>
<div class="a" style="left:677px;top:332px;width:52px;height:28px;background:#f7f7f7;box-shadow:inset 1px 0 #fff,inset -1px 0 #fff,inset 0 -1px #fff"></div>
<svg style="left:695px;top:339.6px" width="10" height="13" viewBox="0 0 10 13"><polygon points="0,5.5 5,0.3 10,5.5" fill="#cdcdcd"/><polygon points="0,7.2 5,12.4 10,7.2" fill="#cdcdcd"/></svg>
<div class="a" style="left:730px;top:332px;width:92px;height:28px;background:#f7f7f7;box-shadow:inset 1px 0 #fff,inset -1px 0 #fff,inset 0 -1px #fff"></div>
<svg style="left:768px;top:339.6px" width="10" height="13" viewBox="0 0 10 13"><polygon points="0,5.5 5,0.3 10,5.5" fill="#cdcdcd"/><polygon points="0,7.2 5,12.4 10,7.2" fill="#cdcdcd"/></svg>
<div class="a" style="left:823px;top:332px;width:75px;height:28px;background:#f7f7f7;box-shadow:inset 1px 0 #fff,inset -1px 0 #fff,inset 0 -1px #fff"></div>
<svg style="left:852px;top:339.6px" width="10" height="13" viewBox="0 0 10 13"><polygon points="0,5.5 5,0.3 10,5.5" fill="#cdcdcd"/><polygon points="0,7.2 5,12.4 10,7.2" fill="#cdcdcd"/></svg>
<div class="a" style="left:899px;top:332px;width:82px;height:28px;background:#f7f7f7;box-shadow:inset 1px 0 #fff,inset -1px 0 #fff,inset 0 -1px #fff"></div>
<svg style="left:932px;top:339.6px" width="10" height="13" viewBox="0 0 10 13"><polygon points="0,5.5 5,0.3 10,5.5" fill="#cdcdcd"/><polygon points="0,7.2 5,12.4 10,7.2" fill="#cdcdcd"/></svg>
<div class="a" style="left:982px;top:332px;width:45px;height:28px;background:#f7f7f7;box-shadow:inset 1px 0 #fff,inset -1px 0 #fff,inset 0 -1px #fff"></div>
<svg style="left:996px;top:339.6px" width="10" height="13" viewBox="0 0 10 13"><polygon points="0,5.5 5,0.3 10,5.5" fill="#cdcdcd"/><polygon points="0,7.2 5,12.4 10,7.2" fill="#cdcdcd"/></svg>
<div class="a" style="left:1028px;top:332px;width:68px;height:28px;background:#f7f7f7;box-shadow:inset 1px 0 #fff,inset -1px 0 #fff,inset 0 -1px #fff"></div>
<svg style="left:1054px;top:339.6px" width="10" height="13" viewBox="0 0 10 13"><polygon points="0,5.5 5,0.3 10,5.5" fill="#cdcdcd"/><polygon points="0,7.2 5,12.4 10,7.2" fill="#cdcdcd"/></svg>
<div class="a" style="left:1097px;top:332px;width:41px;height:28px;background:#f7f7f7;box-shadow:inset 1px 0 #fff,inset -1px 0 #fff,inset 0 -1px #fff"></div>
<svg style="left:1110px;top:339.6px" width="10" height="13" viewBox="0 0 10 13"><polygon points="0,5.5 5,0.3 10,5.5" fill="#cdcdcd"/><polygon points="0,7.2 5,12.4 10,7.2" fill="#cdcdcd"/></svg>
<div class="a" style="left:1139px;top:332px;width:74px;height:28px;background:#f7f7f7;box-shadow:inset 1px 0 #fff,inset -1px 0 #fff,inset 0 -1px #fff"></div>
<svg style="left:1168px;top:339.6px" width="10" height="13" viewBox="0 0 10 13"><polygon points="0,5.5 5,0.3 10,5.5" fill="#cdcdcd"/><polygon points="0,7.2 5,12.4 10,7.2" fill="#cdcdcd"/></svg>
<div class="a" style="left:1214px;top:332px;width:76px;height:28px;background:#f7f7f7;box-shadow:inset 1px 0 #fff,inset -1px 0 #fff,inset 0 -1px #fff"></div>
<svg style="left:1244px;top:339.6px" width="10" height="13" viewBox="0 0 10 13"><polygon points="0,5.5 5,0.3 10,5.5" fill="#cdcdcd"/><polygon points="0,7.2 5,12.4 10,7.2" fill="#cdcdcd"/></svg>
<div class="a" style="left:1291px;top:332px;width:48px;height:28px;background:#f7f7f7;box-shadow:inset 1px 0 #fff,inset -1px 0 #fff,inset 0 -1px #fff"></div>
<svg style="left:1309px;top:339.6px" width="10" height="13" viewBox="0 0 10 13"><polygon points="0,5.5 5,0.3 10,5.5" fill="#cdcdcd"/><polygon points="0,7.2 5,12.4 10,7.2" fill="#cdcdcd"/></svg>
<div class="a" style="left:401px;top:361px;width:12px;height:25px;background:#efefef"></div>
<div class="a" style="left:414px;top:361px;width:128px;height:24px;background:#f9f9f9;box-shadow:inset 1px 0 #fff,inset 0 -1px #fff"></div>
<div class="a" style="left:543px;top:361px;width:796px;height:24px;background:#f9f9f9;box-shadow:inset 1px 0 #fff,inset 0 -1px #fff"></div>
<div class="a" style="left:420px;top:367px;font-weight:bold;line-height:12px;color:#333;text-decoration:underline">Inner Melbourne</div>
<div class="a" style="left:543px;top:367px;width:46px;text-align:right;line-height:12px;color:#333">28</div>
<div class="a" style="left:600px;top:367px;width:66px;text-align:right;line-height:12px;color:#333">14</div>
<div class="a" style="left:677px;top:367px;width:42px;text-align:right;line-height:12px;color:#333">147</div>
<div class="a" style="left:730px;top:367px;width:82px;text-align:right;line-height:12px;color:#333">252</div>
<div class="a" style="left:823px;top:367px;width:65px;text-align:right;line-height:12px;color:#333">35</div>
<div class="a" style="left:899px;top:367px;width:72px;text-align:right;line-height:12px;color:#333">49</div>
<div class="a" style="left:982px;top:367px;width:35px;text-align:right;line-height:12px;color:#333">28</div>
<div class="a" style="left:1028px;top:367px;width:58px;text-align:right;line-height:12px;color:#333">77</div>
<div class="a" style="left:1097px;top:367px;width:31px;text-align:right;line-height:12px;color:#333">7</div>
<div class="a" style="left:1139px;top:367px;width:64px;text-align:right;line-height:12px;color:#333">182</div>
<div class="a" style="left:1214px;top:367px;width:66px;text-align:right;line-height:12px;color:#333">42</div>
<div class="a" style="left:1291px;top:367px;width:37px;text-align:right;line-height:12px;color:#333">861</div>
<div class="a" style="left:401px;top:386px;width:12px;height:25px;background:#efefef"></div>
<div class="a" style="left:414px;top:386px;width:128px;height:24px;background:#ffffff;box-shadow:inset 1px 0 #fff,inset 0 -1px #fff"></div>
<div class="a" style="left:543px;top:386px;width:796px;height:24px;background:#ffffff;box-shadow:inset 1px 0 #fff,inset 0 -1px #fff"></div>
<div class="a" style="left:420px;top:392px;font-weight:bold;line-height:12px;color:#333;text-decoration:underline">Western Melbourne</div>
<div class="a" style="left:543px;top:392px;width:46px;text-align:right;line-height:12px;color:#333">56</div>
<div class="a" style="left:600px;top:392px;width:66px;text-align:right;line-height:12px;color:#333">56</div>
<div class="a" style="left:677px;top:392px;width:42px;text-align:right;line-height:12px;color:#333">273</div>
<div class="a" style="left:730px;top:392px;width:82px;text-align:right;line-height:12px;color:#333">294</div>
<div class="a" style="left:823px;top:392px;width:65px;text-align:right;line-height:12px;color:#333">70</div>
<div class="a" style="left:899px;top:392px;width:72px;text-align:right;line-height:12px;color:#333">119</div>
<div class="a" style="left:982px;top:392px;width:35px;text-align:right;line-height:12px;color:#333">56</div>
<div class="a" style="left:1028px;top:392px;width:58px;text-align:right;line-height:12px;color:#333">56</div>
<div class="a" style="left:1097px;top:392px;width:31px;text-align:right;line-height:12px;color:#333">49</div>
<div class="a" style="left:1139px;top:392px;width:64px;text-align:right;line-height:12px;color:#333">259</div>
<div class="a" style="left:1214px;top:392px;width:66px;text-align:right;line-height:12px;color:#333">70</div>
<div class="a" style="left:1291px;top:392px;width:37px;text-align:right;line-height:12px;color:#333">1,358</div>
<div class="a" style="left:401px;top:411px;width:12px;height:25px;background:#efefef"></div>
<div class="a" style="left:414px;top:411px;width:128px;height:24px;background:#f9f9f9;box-shadow:inset 1px 0 #fff,inset 0 -1px #fff"></div>
<div class="a" style="left:543px;top:411px;width:796px;height:24px;background:#f9f9f9;box-shadow:inset 1px 0 #fff,inset 0 -1px #fff"></div>
<div class="a" style="left:420px;top:417px;font-weight:bold;line-height:12px;color:#333;text-decoration:underline">Melton-Wyndham</div>
<div class="a" style="left:543px;top:417px;width:46px;text-align:right;line-height:12px;color:#333">98</div>
<div class="a" style="left:600px;top:417px;width:66px;text-align:right;line-height:12px;color:#333">28</div>
<div class="a" style="left:677px;top:417px;width:42px;text-align:right;line-height:12px;color:#333">196</div>
<div class="a" style="left:730px;top:417px;width:82px;text-align:right;line-height:12px;color:#333">273</div>
<div class="a" style="left:823px;top:417px;width:65px;text-align:right;line-height:12px;color:#333">14</div>
<div class="a" style="left:899px;top:417px;width:72px;text-align:right;line-height:12px;color:#333">84</div>
<div class="a" style="left:982px;top:417px;width:35px;text-align:right;line-height:12px;color:#333">35</div>
<div class="a" style="left:1028px;top:417px;width:58px;text-align:right;line-height:12px;color:#333">49</div>
<div class="a" style="left:1097px;top:417px;width:31px;text-align:right;line-height:12px;color:#333">7</div>
<div class="a" style="left:1139px;top:417px;width:64px;text-align:right;line-height:12px;color:#333">252</div>
<div class="a" style="left:1214px;top:417px;width:66px;text-align:right;line-height:12px;color:#333">42</div>
<div class="a" style="left:1291px;top:417px;width:37px;text-align:right;line-height:12px;color:#333">1,078</div>
<div class="a" style="left:401px;top:436px;width:12px;height:25px;background:#efefef"></div>
<div class="a" style="left:414px;top:436px;width:128px;height:24px;background:#ffffff;box-shadow:inset 1px 0 #fff,inset 0 -1px #fff"></div>
<div class="a" style="left:543px;top:436px;width:796px;height:24px;background:#ffffff;box-shadow:inset 1px 0 #fff,inset 0 -1px #fff"></div>
<div class="a" style="left:420px;top:442px;font-weight:bold;line-height:12px;color:#333;text-decoration:underline">Moreland City</div>
<div class="a" style="left:543px;top:442px;width:46px;text-align:right;line-height:12px;color:#333">42</div>
<div class="a" style="left:600px;top:442px;width:66px;text-align:right;line-height:12px;color:#333">42</div>
<div class="a" style="left:677px;top:442px;width:42px;text-align:right;line-height:12px;color:#333">161</div>
<div class="a" style="left:730px;top:442px;width:82px;text-align:right;line-height:12px;color:#333">105</div>
<div class="a" style="left:823px;top:442px;width:65px;text-align:right;line-height:12px;color:#333">7</div>
<div class="a" style="left:899px;top:442px;width:72px;text-align:right;line-height:12px;color:#333">42</div>
<div class="a" style="left:982px;top:442px;width:35px;text-align:right;line-height:12px;color:#333">14</div>
<div class="a" style="left:1028px;top:442px;width:58px;text-align:right;line-height:12px;color:#333">56</div>
<div class="a" style="left:1097px;top:442px;width:31px;text-align:right;line-height:12px;color:#333">28</div>
<div class="a" style="left:1139px;top:442px;width:64px;text-align:right;line-height:12px;color:#333">98</div>
<div class="a" style="left:1214px;top:442px;width:66px;text-align:right;line-height:12px;color:#333">35</div>
<div class="a" style="left:1291px;top:442px;width:37px;text-align:right;line-height:12px;color:#333">630</div>
<div class="a" style="left:401px;top:461px;width:12px;height:37px;background:#efefef"></div>
<div class="a" style="left:414px;top:461px;width:128px;height:36px;background:#f9f9f9;box-shadow:inset 1px 0 #fff,inset 0 -1px #fff"></div>
<div class="a" style="left:543px;top:461px;width:796px;height:36px;background:#f9f9f9;box-shadow:inset 1px 0 #fff,inset 0 -1px #fff"></div>
<div class="a" style="left:420px;top:467px;font-weight:bold;line-height:12px;color:#333;text-decoration:underline">Northern Middle<br>Melbourne</div>
<div class="a" style="left:543px;top:467px;width:46px;text-align:right;line-height:12px;color:#333">77</div>
<div class="a" style="left:600px;top:467px;width:66px;text-align:right;line-height:12px;color:#333">70</div>
<div class="a" style="left:677px;top:467px;width:42px;text-align:right;line-height:12px;color:#333">217</div>
<div class="a" style="left:730px;top:467px;width:82px;text-align:right;line-height:12px;color:#333">245</div>
<div class="a" style="left:823px;top:467px;width:65px;text-align:right;line-height:12px;color:#333">56</div>
<div class="a" style="left:899px;top:467px;width:72px;text-align:right;line-height:12px;color:#333">70</div>
<div class="a" style="left:982px;top:467px;width:35px;text-align:right;line-height:12px;color:#333">70</div>
<div class="a" style="left:1028px;top:467px;width:58px;text-align:right;line-height:12px;color:#333">49</div>
<div class="a" style="left:1097px;top:467px;width:31px;text-align:right;line-height:12px;color:#333">0</div>
<div class="a" style="left:1139px;top:467px;width:64px;text-align:right;line-height:12px;color:#333">280</div>
<div class="a" style="left:1214px;top:467px;width:66px;text-align:right;line-height:12px;color:#333">56</div>
<div class="a" style="left:1291px;top:467px;width:37px;text-align:right;line-height:12px;color:#333">1,190</div>
<div class="a" style="left:401px;top:498px;width:12px;height:25px;background:#efefef"></div>
<div class="a" style="left:414px;top:498px;width:128px;height:24px;background:#ffffff;box-shadow:inset 1px 0 #fff,inset 0 -1px #fff"></div>
<div class="a" style="left:543px;top:498px;width:796px;height:24px;background:#ffffff;box-shadow:inset 1px 0 #fff,inset 0 -1px #fff"></div>
<div class="a" style="left:420px;top:504px;font-weight:bold;line-height:12px;color:#333;text-decoration:underline">Hume City</div>
<div class="a" style="left:543px;top:504px;width:46px;text-align:right;line-height:12px;color:#333">14</div>
<div class="a" style="left:600px;top:504px;width:66px;text-align:right;line-height:12px;color:#333">7</div>
<div class="a" style="left:677px;top:504px;width:42px;text-align:right;line-height:12px;color:#333">105</div>
<div class="a" style="left:730px;top:504px;width:82px;text-align:right;line-height:12px;color:#333">105</div>
<div class="a" style="left:823px;top:504px;width:65px;text-align:right;line-height:12px;color:#333">0</div>
<div class="a" style="left:899px;top:504px;width:72px;text-align:right;line-height:12px;color:#333">28</div>
<div class="a" style="left:982px;top:504px;width:35px;text-align:right;line-height:12px;color:#333">7</div>
<div class="a" style="left:1028px;top:504px;width:58px;text-align:right;line-height:12px;color:#333">63</div>
<div class="a" style="left:1097px;top:504px;width:31px;text-align:right;line-height:12px;color:#333">14</div>
<div class="a" style="left:1139px;top:504px;width:64px;text-align:right;line-height:12px;color:#333">84</div>
<div class="a" style="left:1214px;top:504px;width:66px;text-align:right;line-height:12px;color:#333">49</div>
<div class="a" style="left:1291px;top:504px;width:37px;text-align:right;line-height:12px;color:#333">476</div>
<div class="a" style="left:401px;top:523px;width:12px;height:37px;background:#efefef"></div>
<div class="a" style="left:414px;top:523px;width:128px;height:36px;background:#f9f9f9;box-shadow:inset 1px 0 #fff,inset 0 -1px #fff"></div>
<div class="a" style="left:543px;top:523px;width:796px;height:36px;background:#f9f9f9;box-shadow:inset 1px 0 #fff,inset 0 -1px #fff"></div>
<div class="a" style="left:420px;top:529px;font-weight:bold;line-height:12px;color:#333;text-decoration:underline">Northern Outer<br>Melbourne</div>
<div class="a" style="left:543px;top:529px;width:46px;text-align:right;line-height:12px;color:#333">49</div>
<div class="a" style="left:600px;top:529px;width:66px;text-align:right;line-height:12px;color:#333">42</div>
<div class="a" style="left:677px;top:529px;width:42px;text-align:right;line-height:12px;color:#333">266</div>
<div class="a" style="left:730px;top:529px;width:82px;text-align:right;line-height:12px;color:#333">273</div>
<div class="a" style="left:823px;top:529px;width:65px;text-align:right;line-height:12px;color:#333">35</div>
<div class="a" style="left:899px;top:529px;width:72px;text-align:right;line-height:12px;color:#333">77</div>
<div class="a" style="left:982px;top:529px;width:35px;text-align:right;line-height:12px;color:#333">70</div>
<div class="a" style="left:1028px;top:529px;width:58px;text-align:right;line-height:12px;color:#333">119</div>
<div class="a" style="left:1097px;top:529px;width:31px;text-align:right;line-height:12px;color:#333">0</div>
<div class="a" style="left:1139px;top:529px;width:64px;text-align:right;line-height:12px;color:#333">273</div>
<div class="a" style="left:1214px;top:529px;width:66px;text-align:right;line-height:12px;color:#333">56</div>
<div class="a" style="left:1291px;top:529px;width:37px;text-align:right;line-height:12px;color:#333">1,260</div>
<div class="a" style="left:401px;top:560px;width:12px;height:25px;background:#efefef"></div>
<div class="a" style="left:414px;top:560px;width:128px;height:24px;background:#ffffff;box-shadow:inset 1px 0 #fff,inset 0 -1px #fff"></div>
<div class="a" style="left:543px;top:560px;width:796px;height:24px;background:#ffffff;box-shadow:inset 1px 0 #fff,inset 0 -1px #fff"></div>
<div class="a" style="left:420px;top:566px;font-weight:bold;line-height:12px;color:#333;text-decoration:underline">Boroondara City</div>
<div class="a" style="left:543px;top:566px;width:46px;text-align:right;line-height:12px;color:#333">35</div>
<div class="a" style="left:600px;top:566px;width:66px;text-align:right;line-height:12px;color:#333">28</div>
<div class="a" style="left:677px;top:566px;width:42px;text-align:right;line-height:12px;color:#333">105</div>
<div class="a" style="left:730px;top:566px;width:82px;text-align:right;line-height:12px;color:#333">63</div>
<div class="a" style="left:823px;top:566px;width:65px;text-align:right;line-height:12px;color:#333">28</div>
<div class="a" style="left:899px;top:566px;width:72px;text-align:right;line-height:12px;color:#333">7</div>
<div class="a" style="left:982px;top:566px;width:35px;text-align:right;line-height:12px;color:#333">7</div>
<div class="a" style="left:1028px;top:566px;width:58px;text-align:right;line-height:12px;color:#333">77</div>
<div class="a" style="left:1097px;top:566px;width:31px;text-align:right;line-height:12px;color:#333">7</div>
<div class="a" style="left:1139px;top:566px;width:64px;text-align:right;line-height:12px;color:#333">189</div>
<div class="a" style="left:1214px;top:566px;width:66px;text-align:right;line-height:12px;color:#333">70</div>
<div class="a" style="left:1291px;top:566px;width:37px;text-align:right;line-height:12px;color:#333">616</div>
<div class="a" style="left:401px;top:585px;width:12px;height:37px;background:#efefef"></div>
<div class="a" style="left:414px;top:585px;width:128px;height:36px;background:#f9f9f9;box-shadow:inset 1px 0 #fff,inset 0 -1px #fff"></div>
<div class="a" style="left:543px;top:585px;width:796px;height:36px;background:#f9f9f9;box-shadow:inset 1px 0 #fff,inset 0 -1px #fff"></div>
<div class="a" style="left:420px;top:591px;font-weight:bold;line-height:12px;color:#333;text-decoration:underline">Eastern Middle<br>Melbourne</div>
<div class="a" style="left:543px;top:591px;width:46px;text-align:right;line-height:12px;color:#333">42</div>
<div class="a" style="left:600px;top:591px;width:66px;text-align:right;line-height:12px;color:#333">35</div>
<div class="a" style="left:677px;top:591px;width:42px;text-align:right;line-height:12px;color:#333">273</div>
<div class="a" style="left:730px;top:591px;width:82px;text-align:right;line-height:12px;color:#333">336</div>
<div class="a" style="left:823px;top:591px;width:65px;text-align:right;line-height:12px;color:#333">42</div>
<div class="a" style="left:899px;top:591px;width:72px;text-align:right;line-height:12px;color:#333">49</div>
<div class="a" style="left:982px;top:591px;width:35px;text-align:right;line-height:12px;color:#333">28</div>
<div class="a" style="left:1028px;top:591px;width:58px;text-align:right;line-height:12px;color:#333">84</div>
<div class="a" style="left:1097px;top:591px;width:31px;text-align:right;line-height:12px;color:#333">7</div>
<div class="a" style="left:1139px;top:591px;width:64px;text-align:right;line-height:12px;color:#333">329</div>
<div class="a" style="left:1214px;top:591px;width:66px;text-align:right;line-height:12px;color:#333">49</div>
<div class="a" style="left:1291px;top:591px;width:37px;text-align:right;line-height:12px;color:#333">1,274</div>
<div class="a" style="left:401px;top:622px;width:12px;height:11px;background:#efefef"></div>
<div class="a" style="left:414px;top:622px;width:128px;height:11px;background:#ffffff;box-shadow:inset 1px 0 #fff,inset 0 -1px #fff"></div>
<div class="a" style="left:543px;top:622px;width:796px;height:11px;background:#ffffff;box-shadow:inset 1px 0 #fff,inset 0 -1px #fff"></div>
<div class="a" style="left:420px;top:628px;font-weight:bold;line-height:12px;color:#333;text-decoration:underline">Eastern Outer<br>Melbourne</div>
<div class="a" style="left:543px;top:628px;width:46px;text-align:right;line-height:12px;color:#333">77</div>
<div class="a" style="left:600px;top:628px;width:66px;text-align:right;line-height:12px;color:#333">14</div>
<div class="a" style="left:677px;top:628px;width:42px;text-align:right;line-height:12px;color:#333">196</div>
<div class="a" style="left:730px;top:628px;width:82px;text-align:right;line-height:12px;color:#333">252</div>
<div class="a" style="left:823px;top:628px;width:65px;text-align:right;line-height:12px;color:#333">42</div>
<div class="a" style="left:899px;top:628px;width:72px;text-align:right;line-height:12px;color:#333">49</div>
<div class="a" style="left:982px;top:628px;width:35px;text-align:right;line-height:12px;color:#333">56</div>
<div class="a" style="left:1028px;top:628px;width:58px;text-align:right;line-height:12px;color:#333">28</div>
<div class="a" style="left:1097px;top:628px;width:31px;text-align:right;line-height:12px;color:#333">7</div>
<div class="a" style="left:1139px;top:628px;width:64px;text-align:right;line-height:12px;color:#333">252</div>
<div class="a" style="left:1214px;top:628px;width:66px;text-align:right;line-height:12px;color:#333">63</div>
<div class="a" style="left:1291px;top:628px;width:37px;text-align:right;line-height:12px;color:#333">1,036</div>

<!-- scrollbar -->
<div class="a" style="left:1349px;top:65px;width:16px;height:568px;background:#f1f1f1"></div>
<svg style="left:1353px;top:71.5px" width="9" height="5" viewBox="0 0 9 5"><polygon points="0,5 4.5,0 9,5" fill="#a3a3a3"/></svg>
<div class="a" style="left:1351px;top:82px;width:13px;height:358px;background:#c1c1c1"></div>
<svg style="left:1353px;top:622px" width="9" height="5" viewBox="0 0 9 5"><polygon points="0,0 4.5,5 9,0" fill="#505050"/></svg>
<!-- footer -->
<div id="footer"></div>
<div class="a" style="left:1006.5px;top:640px;color:#fff;font-size:9px">Feedback</div>
<div class="a" style="left:1062.5px;top:640px;color:#fff;font-size:9px">Enquiry</div>
<div class="a" style="left:1108.5px;top:640px;color:#fff;font-size:9px">Need Help?</div>
<div class="a" style="left:1172.5px;top:640px;color:#fff;font-size:9px">Training</div>
<div class="a" style="left:1200px;top:634.5px;width:135px;text-align:right;color:#fff;font-size:9px;line-height:10px">Powered by SuperSTAR<br>WingArc Australia</div>
<svg style="left:1342px;top:636px" width="17" height="18" viewBox="0 0 17 18"><path d="M2,1.6 L6.4,0.6 L5.2,15.2 L0.8,16.6 Z" fill="#c0262c"/><path d="M2.6,5 L5,3 L4.1,14 L2.3,14.5 L2.9,6.6 L2.4,6.9 Z" fill="#fff"/><text x="6.8" y="13.8" font-family="Liberation Sans" font-style="italic" font-weight="bold" font-size="9" fill="#111" textLength="8.4" lengthAdjust="spacingAndGlyphs">ST</text></svg>
</body></html>
